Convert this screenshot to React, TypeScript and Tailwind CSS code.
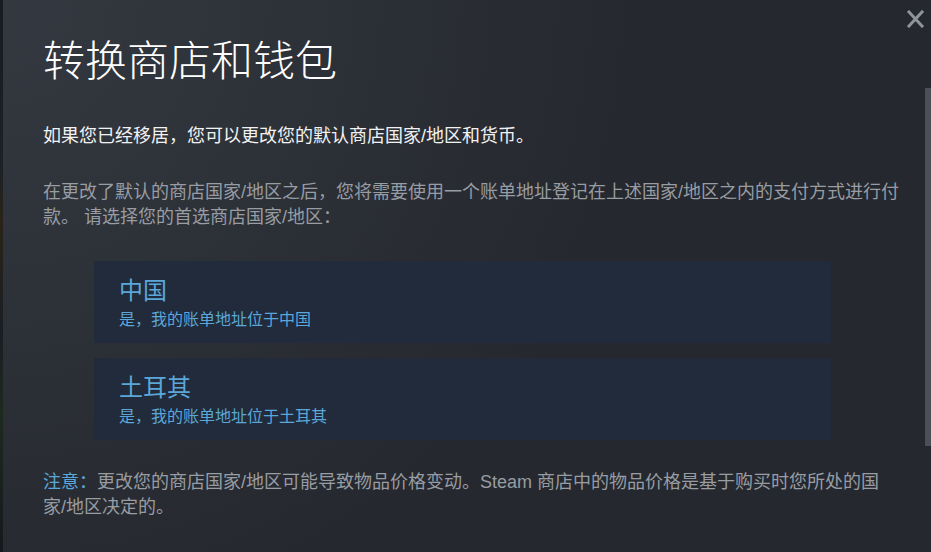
const font = "font-['Liberation_Sans','Noto_Sans_CJK_SC',sans-serif]";

function CloseIcon() {
  return (
    <svg width="17" height="18" viewBox="0 0 17 18" fill="none">
      <path d="M2 2L15 16M15 2L2 16" stroke="#8f939a" strokeWidth="3" strokeLinecap="square" />
    </svg>
  );
}

function RegionOption({ name, label }: { name: string; label: string }) {
  return (
    <div className="bg-[#212b3b] pl-[25px] pt-4 pb-[12px] cursor-pointer">
      <div className="text-[24px] leading-[28px] text-[#5ba7d9]">{name}</div>
      <div className="mt-[4px] text-[16px] leading-[22px] text-[#5ba7d9]">{label}</div>
    </div>
  );
}

export default function App() {
  return (
    <div className={`w-[931px] h-[552px] overflow-hidden flex bg-[#25282e] ${font}`}>
      <div className="w-[3px] bg-[linear-gradient(to_bottom,#181b21_0%,#1c2027_30%,#2a2416_40%,#1a1d24_60%,#1d2a1e_75%,#16181d_100%)]" />
      <div className="relative flex-1 bg-[#25282e] bg-[radial-gradient(circle_at_top_left,rgba(74,81,92,0.4)_0%,rgba(75,81,92,0)_60%)]">
        <button className="absolute left-[904px] top-[10px] p-0">
          <CloseIcon />
        </button>
        <div className="absolute left-[922px] top-[88px] w-[6px] h-[358px] bg-[#4a4f59]" />

        <div className="pl-[40px] pt-[38px]">
          <h1 className="text-[42px] leading-[48px] font-light text-white">转换商店和钱包</h1>

          <p className="mt-[38px] text-[18px] leading-[25px] text-[#f2f2f2]">
            如果您已经移居，您可以更改您的默认商店国家/地区和货币。
          </p>

          <p className="mt-[31px] w-[862px] text-[18px] leading-[25px] text-[#989ca3]">
            在更改了默认的商店国家/地区之后，您将需要使用一个账单地址登记在上述国家/地区之内的支付方式进行付款。 请选择您的首选商店国家/地区：
          </p>

          <div className="mt-[31px] ml-[51px] w-[737px] flex flex-col gap-[15px]">
            <RegionOption name="中国" label="是，我的账单地址位于中国" />
            <RegionOption name="土耳其" label="是，我的账单地址位于土耳其" />
          </div>

          <p className="mt-[30px] w-[845px] text-[18px] leading-[25px] text-[#989ca3]">
            <span className="text-[#5ba7d9]">注意：</span>更改您的商店国家/地区可能导致物品价格变动。Steam 商店中的物品价格是基于购买时您所处的国家/地区决定的。
          </p>
        </div>
      </div>
    </div>
  );
}
